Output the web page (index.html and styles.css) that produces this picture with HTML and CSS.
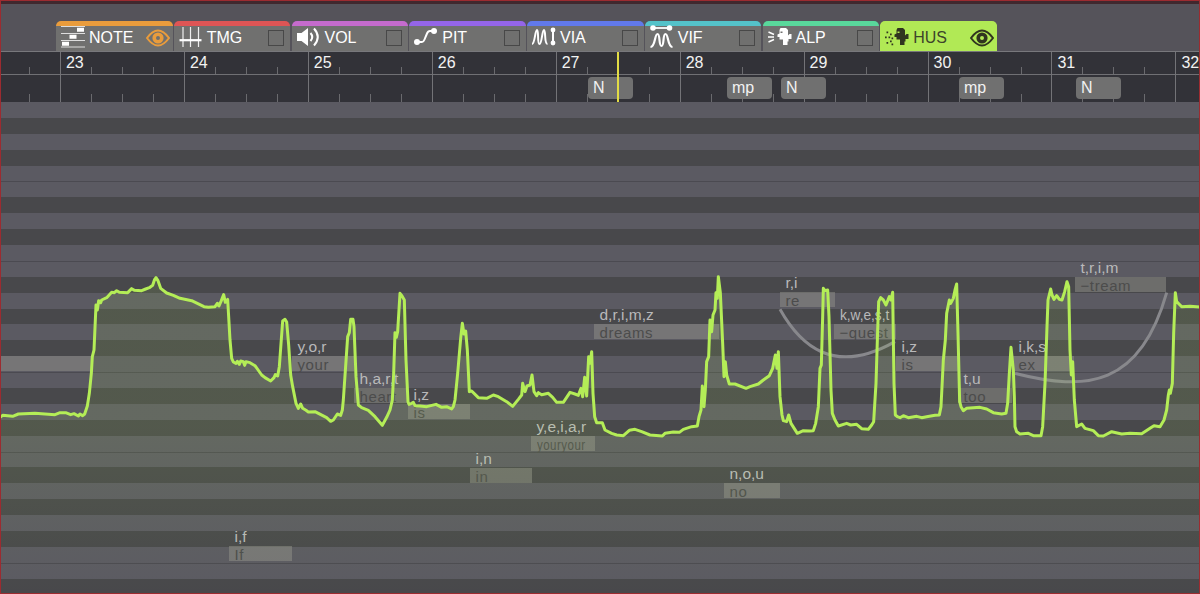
FILE: index.html
```html
<!DOCTYPE html>
<html lang="en">
	<head>
		<meta charset="utf-8">
		<title>Parameter editor</title>
		<link rel="stylesheet" href="styles.css">
	</head>
	<body>
		<div class="editor">
			<nav class="tabs">
				<div class="tab note">
					<svg class="icon" viewBox="0 0 26 26" fill="none" stroke="#fff"><path d="M1 1.500h24M1 8.500h24M1 15.500h24M1 22h24" stroke="#ddd" stroke-width="1"/><path d="M17 4.800h7M9.500 11.800h7M2 18.800h7" stroke-width="4"/></svg>
					<span class="label">NOTE</span>
					<svg class="eye" viewBox="0 0 24 18"><path d="M1 9Q12-6 23 9Q12 24 1 9z" fill="none" stroke="currentColor" stroke-width="2"/><circle cx="12" cy="9" r="3.800" fill="none" stroke="currentColor" stroke-width="3.600"/></svg>
				</div>
				<div class="tab tmg">
					<svg class="icon" viewBox="0 0 26 26" fill="none" stroke="#eee"><path d="M5 2v20M12.500 2v20M20.500 2v20" stroke-width="1.200"/><path d="M1.500 15.200h22" stroke="#fff" stroke-width="2.200"/></svg>
					<span class="label">TMG</span>
					<span class="check"></span>
				</div>
				<div class="tab vol">
					<svg class="icon" viewBox="0 0 26 26" fill="none" stroke="#fff" stroke-width="2"><path d="M1 8h4.500L12 3v18l-6.500-5H1z" fill="#fff" stroke="none"/><path d="M14.500 8q3.500 4 0 8M18 3.500q7.500 8.500 0 17"/></svg>
					<span class="label">VOL</span>
					<span class="check"></span>
				</div>
				<div class="tab pit">
					<svg class="icon" viewBox="0 0 26 26" fill="#fff"><path d="M4 17h5q1.500 0 2.500-2.500l2.500-6Q15 6 17 6h4" fill="none" stroke="#fff" stroke-width="2"/><circle cx="4" cy="17" r="3"/><circle cx="21" cy="6" r="3"/></svg>
					<span class="label">PIT</span>
					<span class="check"></span>
				</div>
				<div class="tab via">
					<svg class="icon" viewBox="0 0 26 26" fill="none" stroke="#fff"><path d="M1 19c3 0 3-14 5-14s0 14 2.500 14 2.500-14 4.500-14 0 14 3.500 14" stroke-width="2"/><path d="M22 5v13" stroke-width="2"/><circle cx="22" cy="5" r="2.400" fill="#fff" stroke="none"/><circle cx="22" cy="18" r="2.400" fill="#fff" stroke="none"/></svg>
					<span class="label">VIA</span>
					<span class="check"></span>
				</div>
				<div class="tab vif">
					<svg class="icon" viewBox="0 0 26 26" fill="none" stroke="#fff"><path d="M1.500 22c5 0 4-13 7-13s1 12 4 12 1-12 4-12 2 13 7 13" stroke-width="2.200"/><path d="M4 3h17" stroke-width="1.800"/><circle cx="4" cy="3" r="2.800" fill="#fff" stroke="none"/><circle cx="20.500" cy="3" r="2.800" fill="#fff" stroke="none"/></svg>
					<span class="label">VIF</span>
					<span class="check"></span>
				</div>
				<div class="tab alp">
					<svg class="icon" viewBox="0 0 26 26" fill="#fff"><path d="M1.500 7l5.500 2.500M1 12h6M1.500 17l5.500-2.500" fill="none" stroke="#fff" stroke-width="1.400"/><path fill-rule="evenodd" d="M13.500 3h5.500l2 2v5.500l1.500-1.500h2v5h-3v2.500h-1V20h-4.500v-5.500H12.500V12H10.500V9.500l2-1V5zM13.500 6.500v1.500h2V6.500z"/></svg>
					<span class="label">ALP</span>
					<span class="check"></span>
				</div>
				<div class="tab hus">
					<svg class="icon" viewBox="0 0 26 26" fill="#30351f"><path d="M2.500 6.500h1.700v1.700H2.500zM6 8.500h1.700v1.700H6zM1 11.500h1.700v1.700H1zM4.500 11.500h1.700v1.700H4.500zM7.500 12.500h1.700v1.700H7.500zM2.500 17h1.700v1.700H2.500zM6 15.500h1.700v1.700H6zM7.500 18.500h1.700v1.700H7.500z"/><path fill-rule="evenodd" d="M13.500 3h5.500l2 2v5.500l1.500-1.500h2v5h-3v2.500h-1V20h-4.500v-5.500H12.500V12H10.500V9.500l2-1V5zM13.500 6.500v1.500h2V6.500z"/></svg>
					<span class="label">HUS</span>
					<svg class="eye" viewBox="0 0 24 18"><path d="M1 9Q12-6 23 9Q12 24 1 9z" fill="none" stroke="currentColor" stroke-width="2"/><circle cx="12" cy="9" r="3.800" fill="none" stroke="currentColor" stroke-width="3.600"/></svg>
				</div>
			</nav>

			<div class="ruler">
				<div class="measures">
					<div class="measure"></div>
					<div class="measure">23</div>
					<div class="measure">24</div>
					<div class="measure">25</div>
					<div class="measure">26</div>
					<div class="measure">27</div>
					<div class="measure">28</div>
					<div class="measure">29</div>
					<div class="measure">30</div>
					<div class="measure">31</div>
					<div class="measure">32</div>
				</div>
				<span class="mark" style="left: 588px">N</span>
				<span class="mark" style="left: 727px">mp</span>
				<span class="mark" style="left: 781px">N</span>
				<span class="mark" style="left: 959px">mp</span>
				<span class="mark" style="left: 1076px">N</span>
				<span class="playhead"></span>
			</div>

			<div class="roll">
				<div class="key"></div><div class="key"></div><div class="key"></div><div class="key"></div>
				<div class="key"></div><div class="key"></div><div class="key"></div><div class="key"></div>
				<div class="key"></div><div class="key"></div><div class="key"></div><div class="key"></div>
				<div class="key"></div><div class="key"></div><div class="key"></div><div class="key"></div>
				<div class="key"></div><div class="key"></div><div class="key"></div><div class="key"></div>
				<div class="key"></div><div class="key"></div><div class="key"></div><div class="key"></div>
				<div class="key"></div><div class="key"></div><div class="key"></div><div class="key"></div>
				<div class="key"></div><div class="key"></div><div class="key"></div>
			</div>

			<div class="lyric" style="left: 0; top: 356px; width: 92px"></div>
			<div class="lyric" style="left: 229px; top: 546px; width: 63px"><i>i,f</i><b>If</b></div>
			<div class="lyric" style="left: 292px; top: 356px; width: 62px"><i>y,o,r</i><b>your</b></div>
			<div class="lyric" style="left: 354px; top: 388px; width: 54px"><i>h,a,r,t</i><b>heart</b></div>
			<div class="lyric" style="left: 408px; top: 404px; width: 62px"><i>i,z</i><b>is</b></div>
			<div class="lyric" style="left: 470px; top: 468px; width: 62px"><i>i,n</i><b>in</b></div>
			<div class="lyric" style="left: 531px; top: 436px; width: 64px"><i>y,e,i,a,r</i><b class="narrow">youryour</b></div>
			<div class="lyric" style="left: 594px; top: 324px; width: 125px"><i>d,r,i,m,z</i><b>dreams</b></div>
			<div class="lyric" style="left: 724px; top: 483px; width: 56px"><i>n,o,u</i><b>no</b></div>
			<div class="lyric" style="left: 780px; top: 292px; width: 55px"><i>r,i</i><b>re</b></div>
			<div class="lyric" style="left: 834px; top: 324px; width: 62px"><i class="tight">k,w,e,s,t</i><b>−quest</b></div>
			<div class="lyric" style="left: 896px; top: 356px; width: 62px"><i>i,z</i><b>is</b></div>
			<div class="lyric" style="left: 958px; top: 388px; width: 54px"><i>t,u</i><b>too</b></div>
			<div class="lyric" style="left: 1013px; top: 356px; width: 61px"><i>i,k,s</i><b>ex</b></div>
			<div class="lyric" style="left: 1075px; top: 277px; width: 91px"><i>t,r,i,m</i><b>−tream</b></div>

			<!-- three units per pixel, origin 260px down the window -->
			<svg class="graph" viewBox="0 -780 3600 1782">
				<defs>
					<linearGradient id="fade" gradientUnits="userSpaceOnUse" x1="0" y1="500" x2="0" y2="1002">
						<stop offset="0" stop-color="#b4ee58" stop-opacity=".1"/>
						<stop offset="1" stop-color="#b4ee58" stop-opacity="0"/>
					</linearGradient>
					<path id="curve" d="M0 472L8 466 38 469 55 462 105 460 165 464 180 458 197 458 212 464 222 461 235 468 240 462 248 467 254 462 262 438 268 400 274 340 277 290 282 270 288 135 292 150 296 122 302 128 305 120 320 113 335 97 343 98 350 92 358 97 383 98 395 86 403 91 425 92 437 87 448 83 458 76 464 58 468 53 474 62 482 85 500 99 520 106 540 115 575 122 612 140 625 142 645 140 652 130 657 138 664 122 671 104 676 127 683 118 690 240 695 295 700 306 708 310 712 304 718 313 722 303 730 305 734 316 738 305 750 308 765 317 785 345 795 353 812 363 822 353 826 344 833 348 838 320 848 183 855 178 860 186 866 255 872 345 878 380 888 430
						895 445 902 432 908 445 918 451 925 456 945 455 980 473 992 484 1000 480 1012 462 1022 466 1027 450 1030 420 1043 230 1048 218 1052 178 1059 178 1062 200 1068 350 1075 435 1085 443 1105 451 1125 470 1147 496 1160 472 1170 450 1177 420 1181 340 1185 218 1189 232 1193 215 1200 100 1206 108 1213 120 1218 300 1224 425 1227 433 1235 430 1240 427 1245 437 1260 438 1280 440 1308 433 1325 442 1340 440 1355 447 1360 440 1365 420 1373 340 1382 235 1387 190 1392 222 1397 213 1402 270 1408 395 1415 393 1435 413 1460 415 1480 405 1495 410 1520 425 1538 439 1555 418 1565 405 1568 370 1575 395 1581 378 1590 375 1596 345 1602 395 1610 407 1615 398 1625 404 1645 400
						1658 412 1670 427 1690 427 1700 412 1710 397 1725 402 1735 406 1743 385 1748 410 1754 352 1760 408 1766 290 1770 310 1775 275 1779 400 1784 470 1790 488 1807 488 1815 510 1835 520 1850 525 1870 527 1888 511 1905 508 1925 515 1950 525 1987 528 1995 520 2020 516 2038 517 2050 508 2075 500 2092 498 2097 470 2103 450 2107 378 2112 440 2116 390 2120 305 2126 290 2130 180 2135 215 2139 165 2145 150 2148 98 2152 115 2155 50 2161 98 2168 250 2172 350 2176 305 2180 345 2188 372 2205 372 2238 385 2250 380 2275 372 2290 360 2308 347 2318 325 2326 285 2331 325 2335 275
						2340 410 2346 465 2350 482 2360 485 2366 465 2373 490 2392 520 2410 512 2430 513 2440 512 2447 490 2455 440 2460 325 2464 315 2468 170 2470 85 2475 92 2483 90 2487 170 2493 390 2497 460 2505 480 2515 498 2540 490 2552 495 2570 493 2585 506 2605 508 2615 495 2621 485 2628 370 2633 210 2636 125 2642 113 2650 120 2658 135 2668 110 2673 120 2678 97 2682 370 2686 465 2692 470 2700 473 2710 467 2725 473 2750 469 2765 473 2780 470 2805 466 2818 465 2823 440 2830 300 2836 240 2840 160 2845 135 2848 120 2852 130 2860 115 2865 90 2870 72 2874 220 2879 425 2883 440
						2890 452 2900 445 2940 442 2960 447 2980 458 3005 462 3018 460 3023 430 3028 340 3033 262 3040 330 3043 410 3045 500 3050 515 3060 522 3085 520 3100 527 3123 527 3128 500 3135 370 3141 200 3144 120 3152 87 3156 105 3162 118 3170 107 3178 118 3186 120 3194 95 3201 65 3206 80 3210 270 3214 345 3218 305 3223 420 3230 500 3245 492 3255 505 3280 512 3295 527 3310 528 3335 515 3365 522 3390 520 3425 521 3450 505 3462 497 3480 500 3492 480 3500 450 3505 405 3508 390 3511 400 3517 370 3521 220 3526 98 3530 125 3540 135 3545 140 3570 139 3600 141"/>
				</defs>
				<path class="slur" d="M2340 148C2400 255 2500 350 2685 245"/>
				<path class="slur" d="M3045 340C3260 395 3420 380 3500 98"/>
				<path class="area" fill="url(#fade)" d=""/>
				<use href="#curve" class="curve"/>
			</svg>
			<div class="frame"></div>
		</div>
		<script src="graph.js"></script>
	</body>
</html>
```
FILE: styles.css
```css
body {
	margin: 0;
	background: #55535a;
	font-family: "Liberation Sans", Arial, sans-serif;
}
.editor {
	position: relative;
	display: flex;
	flex-direction: column;
	width: 1200px;
	height: 594px;
	overflow: hidden;
}

/* parameter tabs */
.tabs {
	display: flex;
	flex: none;
	align-items: flex-end;
	gap: 1.25px;
	box-sizing: border-box;
	height: 51px;
	padding-left: 56px;
	border-top: 4px solid #40282e;
}
.tab {
	display: flex;
	align-items: center;
	box-sizing: border-box;
	width: 116.5px;
	height: 30.5px;
	padding: 0 3px 0 4px;
	border-top: 5px solid;
	border-radius: 5px 5px 0 0;
	background: #70706f;
}
.note { border-color: #e99c3c; }
.tmg { border-color: #de5555; }
.vol { border-color: #c56bcd; }
.pit { border-color: #9465e8; }
.via { border-color: #6179ea; }
.vif { border-color: #54c2c9; }
.alp { border-color: #59d89b; }
.hus {
	border-color: #b1e955;
	background: #b1e955;
}
.icon {
	flex: none;
	width: 26px;
	height: 26px;
}
.label {
	margin-left: 3px;
	color: #fff;
	font-size: 16px;
	line-height: 24px;
}
.hus .label {
	color: #3d442b;
}
.eye {
	width: 24px;
	height: 18px;
	margin-left: auto;
	color: #e99c3c;
}
.hus .eye {
	color: #30351f;
}
.check {
	box-sizing: border-box;
	width: 16px;
	height: 16px;
	margin: 0 3px 0 auto;
	border: 1.5px solid #484848;
}

/* measure ruler */
.ruler {
	position: relative;
	flex: none;
	box-sizing: border-box;
	height: 51px;
	border-top: 1px solid #78787c;
	background: #323238;
}
.measures {
	display: flex;
	height: 50px;
	margin-left: -64px;
	background: linear-gradient(#707074, #707074) 0 22px / 100% 1px no-repeat;
}
.measure {
	flex: none;
	box-sizing: border-box;
	width: 123.95px;
	padding: 2px 0 0 5px;
	border-left: 1.5px solid #737377;
	background:
		repeating-linear-gradient(90deg, transparent 0 30px, #6a6a6e 30px 31px) 0 15px / 95px 7px no-repeat,
		repeating-linear-gradient(90deg, transparent 0 30px, #6a6a6e 30px 31px) 0 42px / 95px 8px no-repeat;
	color: #f2f2f2;
	font-size: 16px;
	line-height: 18px;
}
.mark {
	position: absolute;
	top: 25px;
	box-sizing: border-box;
	width: 45px;
	height: 22px;
	padding-left: 5px;
	border-radius: 4px;
	background: #707070;
	color: #f2f2f2;
	font-size: 16px;
	line-height: 22px;
}
.playhead {
	position: absolute;
	top: 0;
	left: 617px;
	width: 1.5px;
	height: 50px;
	background: #e2dc45;
}

/* piano roll */
.roll {
	display: flex;
	flex-direction: column;
}
.key {
	flex: none;
	box-sizing: border-box;
	height: 15.9px;
	background: #5b5a62;
}
.key:nth-child(12n + 2),
.key:nth-child(12n + 4),
.key:nth-child(12n + 7),
.key:nth-child(12n + 9),
.key:nth-child(12n + 12) {
	background: #48484b;
}
.key:nth-child(12n + 6),
.key:nth-child(12n + 11) {
	border-top: 1px solid #4b4a51;
}
.lyric {
	position: absolute;
	height: 15px;
	background: rgba(140, 140, 134, .55);
	white-space: nowrap;
}
.lyric i,
.lyric b {
	position: absolute;
	left: 5.5px;
	font-size: 15.5px;
	font-style: normal;
	font-weight: normal;
	line-height: 16px;
	transform-origin: left;
}
.lyric i {
	top: -17px;
	color: #b9b9ba;
}
.lyric b {
	top: 1px;
	color: #4c4c4c;
	font-size: 15px;
	letter-spacing: .6px;
}
.lyric .narrow { transform: scaleX(.77); }
.lyric .tight { transform: scaleX(.88); }

.graph {
	position: absolute;
	top: 0;
	left: 0;
	width: 1200px;
	height: 594px;
}
.curve {
	fill: none;
	stroke: #b4ed57;
	stroke-width: 9;
	stroke-linejoin: round;
}
.slur {
	fill: none;
	stroke: #88888c;
	stroke-width: 9;
}
.frame {
	position: absolute;
	inset: 0;
	border: 1px solid #9c2b30;
}
```
FILE: graph.js
```js
// close the curve along the bottom edge to get the shaded area
var line = document.getElementById('curve').getAttribute('d');
document.querySelector('.area').setAttribute('d', line + 'V1002H0z');
```
